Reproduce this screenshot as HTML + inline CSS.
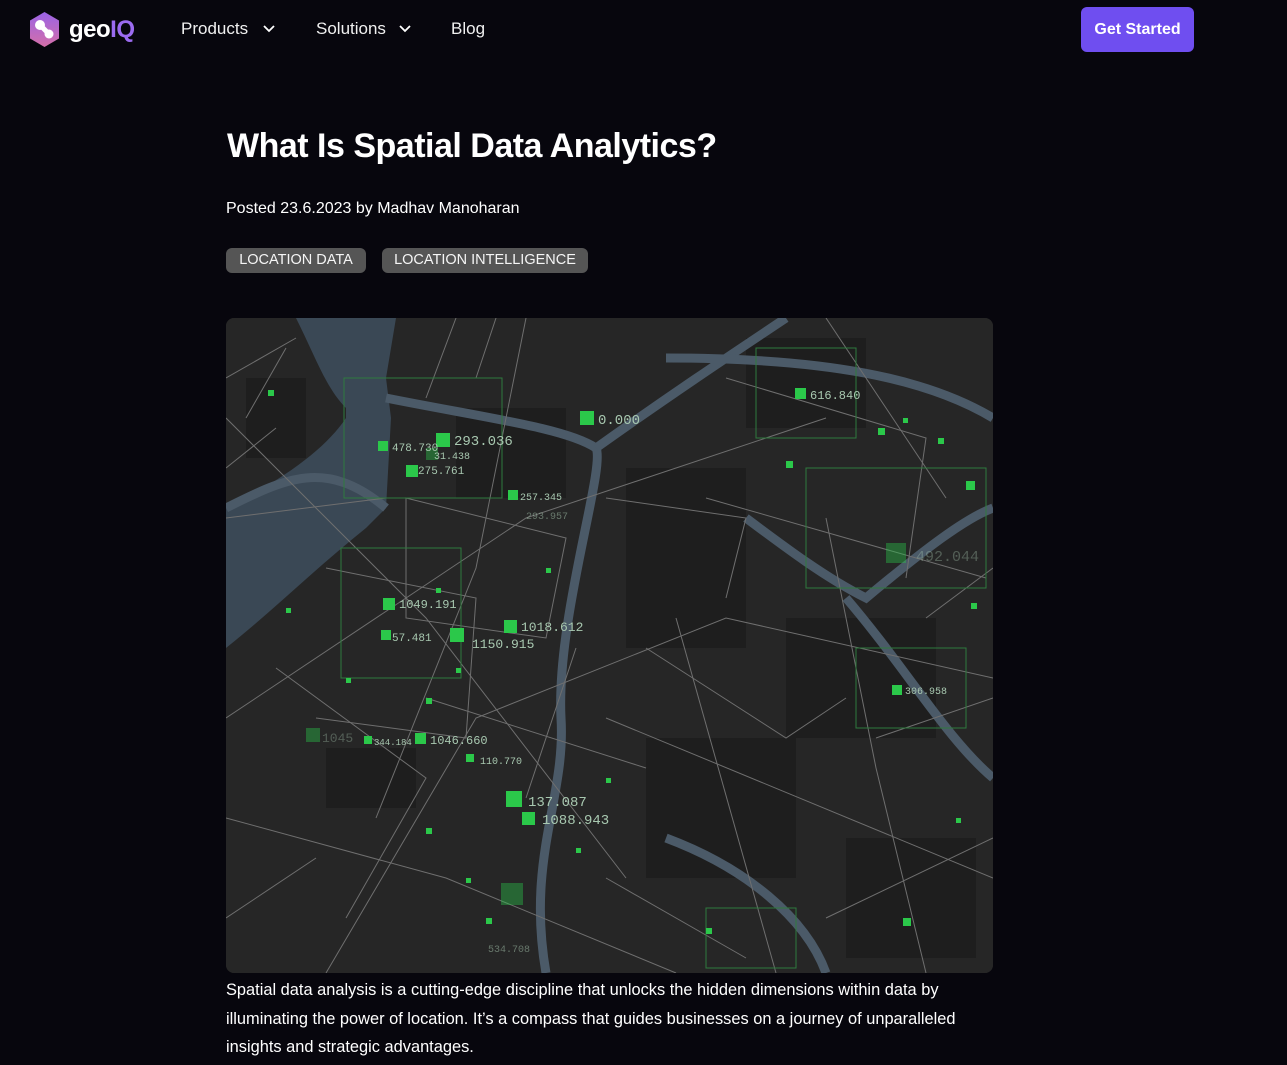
<!DOCTYPE html>
<html><head><meta charset="utf-8"><style>
*{margin:0;padding:0;box-sizing:border-box}
body{width:1287px;height:1065px;background:#07060d;color:#fff;font-family:"Liberation Sans",sans-serif;overflow:hidden;position:relative}
.nav{position:absolute;top:0;left:0;right:0;height:60px}
.logo{position:absolute;left:28px;top:11px;display:flex;align-items:center}
.logo span{font-size:24px;font-weight:bold;margin-left:8px;letter-spacing:-0.5px}
.logo span b{color:#9b6bf0}
.nl{position:absolute;top:19px;font-size:17px;color:#f0f0f0}
.btn{position:absolute;left:1081px;top:7px;width:113px;height:45px;background:#6f4ef0;border-radius:6px;font-weight:bold;font-size:16px;text-align:center;line-height:45px}
h1{position:absolute;left:227px;top:127px;font-size:34px;font-weight:bold;letter-spacing:-0.5px}
.post{position:absolute;left:226px;top:200px;font-size:16px}
.tag{position:absolute;top:248px;height:25px;background:#555;border-radius:6px;font-size:14.5px;line-height:25px;padding:0 9px;color:#f5f5f5;white-space:nowrap;text-align:center}
.img{position:absolute;left:226px;top:318px;width:767px;height:655px;border-radius:8px;overflow:hidden;background:#262626}
.p{position:absolute;left:226px;top:976px;width:760px;font-size:16.4px;line-height:28.5px}
</style></head><body>
<div class="nav">
<div class="logo"><svg width="33" height="37" viewBox="0 0 33 37"><defs><linearGradient id="g" x1="0" y1="0" x2="0" y2="1"><stop offset="0" stop-color="#9a63e6"/><stop offset="1" stop-color="#d56fa8"/></linearGradient></defs><path d="M16.5 1 L31 9.5 V27.5 L16.5 36 L2 27.5 V9.5Z" fill="url(#g)"/><circle cx="12" cy="14" r="5" fill="#fff"/><circle cx="21" cy="23" r="4.5" fill="#fff"/><path d="M12 14 L21 23" stroke="#fff" stroke-width="5"/></svg><span>geo<b>IQ</b></span></div>
<div class="nl" style="left:181px">Products</div>
<svg style="position:absolute;left:263px;top:25px" width="12" height="8"><path d="M1 1 L6 6 L11 1" stroke="#fff" stroke-width="1.8" fill="none"/></svg>
<div class="nl" style="left:316px">Solutions</div>
<svg style="position:absolute;left:399px;top:25px" width="12" height="8"><path d="M1 1 L6 6 L11 1" stroke="#fff" stroke-width="1.8" fill="none"/></svg>
<div class="nl" style="left:451px">Blog</div>
<div class="btn">Get Started</div>
</div>
<h1>What Is Spatial Data Analytics?</h1>
<div class="post">Posted 23.6.2023 by Madhav Manoharan</div>
<div class="tag" style="left:226px;width:140px">LOCATION DATA</div>
<div class="tag" style="left:382px;width:206px">LOCATION INTELLIGENCE</div>
<div class="img"><svg width="767" height="655" viewBox="0 0 767 655">
<rect width="767" height="655" fill="#262626"/>
<g fill="#1e1e1e"><rect x="400" y="150" width="120" height="180"/><rect x="560" y="300" width="150" height="120"/><rect x="20" y="60" width="60" height="80"/><rect x="230" y="90" width="110" height="90"/><rect x="420" y="420" width="150" height="140"/><rect x="620" y="520" width="130" height="120"/><rect x="520" y="20" width="120" height="90"/><rect x="100" y="430" width="90" height="60"/></g>
<path d="M70 0 C90 40 100 70 120 90 L120 100 C100 130 60 160 0 190 L0 330 C50 290 90 250 140 210 L160 190 L165 100 L160 60 L170 0Z" fill="#3a4855"/>
<g stroke="#4b5a68" stroke-width="9" fill="none"><path d="M160 80 C260 100 340 110 370 130 C380 150 330 300 335 400 C340 480 300 540 320 655"/><path d="M370 130 C440 80 500 40 560 0"/><path d="M520 200 C560 230 600 260 640 280 C700 230 740 200 767 190"/><path d="M440 40 C600 40 700 60 767 100"/><path d="M620 280 C680 350 720 420 767 460"/><path d="M440 520 C520 550 580 600 600 655"/><path d="M0 190 C60 160 100 140 160 190"/></g>
<g stroke="#6f6f6f" stroke-width="1" fill="none"><path d="M0 100 L200 300 L400 560"/><path d="M0 400 L300 200 L600 100"/><path d="M100 655 L250 400 L500 300 L767 360"/><path d="M0 500 L220 560 L450 655"/><path d="M300 0 L250 250 L150 500"/><path d="M600 200 L650 450 L700 655"/><path d="M380 400 L767 560"/><path d="M450 300 L550 655"/><path d="M0 200 L160 180"/><path d="M200 380 L420 450"/><path d="M600 0 L720 180"/><path d="M480 180 L760 260"/><path d="M0 60 L70 20 M20 100 L60 30 M0 150 L50 110"/><path d="M180 180 L340 220 L320 320 L180 300Z"/><path d="M100 250 L250 280 L240 420 L90 400"/><path d="M50 350 L200 460 L120 600"/><path d="M380 180 L520 200 L500 280"/><path d="M500 60 L700 120 L680 260"/><path d="M420 330 L560 420 L620 380"/><path d="M380 560 L520 640"/><path d="M650 420 L767 380"/><path d="M600 600 L767 520"/><path d="M0 600 L90 540"/><path d="M230 0 L200 80 M270 0 L250 60"/><path d="M350 330 L300 480"/><path d="M700 300 L767 250"/></g>
<g stroke="#2f7a3e" stroke-width="1" fill="none"><rect x="118" y="60" width="158" height="120"/><rect x="530" y="30" width="100" height="90"/><rect x="580" y="150" width="180" height="120"/><rect x="630" y="330" width="110" height="80"/><rect x="115" y="230" width="120" height="130"/><rect x="480" y="590" width="90" height="60"/></g>
<g fill="#2bc84a"><rect x="354" y="93" width="14" height="14"/><rect x="569" y="70" width="11" height="11"/><rect x="210" y="115" width="14" height="14"/><rect x="152" y="123" width="10" height="10"/><rect x="180" y="147" width="12" height="12"/><rect x="282" y="172" width="10" height="10"/><rect x="157" y="280" width="12" height="12"/><rect x="278" y="302" width="13" height="13"/><rect x="155" y="312" width="10" height="10"/><rect x="224" y="310" width="14" height="14"/><rect x="666" y="367" width="10" height="10"/><rect x="189" y="415" width="11" height="11"/><rect x="280" y="473" width="16" height="16"/><rect x="296" y="494" width="13" height="13"/><rect x="240" y="436" width="8" height="8"/><rect x="138" y="418" width="8" height="8"/><rect x="740" y="163" width="9" height="9"/><rect x="677" y="600" width="8" height="8"/><rect x="652" y="110" width="7" height="7"/><rect x="560" y="143" width="7" height="7"/><rect x="42" y="72" width="6" height="6"/><rect x="200" y="380" width="6" height="6"/><rect x="230" y="350" width="5" height="5"/><rect x="210" y="270" width="5" height="5"/><rect x="60" y="290" width="5" height="5"/><rect x="120" y="360" width="5" height="5"/><rect x="200" y="510" width="6" height="6"/><rect x="260" y="600" width="6" height="6"/><rect x="480" y="610" width="6" height="6"/><rect x="712" y="120" width="6" height="6"/><rect x="677" y="100" width="5" height="5"/><rect x="745" y="285" width="6" height="6"/><rect x="380" y="460" width="5" height="5"/><rect x="350" y="530" width="5" height="5"/><rect x="240" y="560" width="5" height="5"/><rect x="320" y="250" width="5" height="5"/><rect x="730" y="500" width="5" height="5"/></g>
<g fill="#2bc84a" opacity="0.4"><rect x="660" y="225" width="20" height="20"/><rect x="80" y="410" width="14" height="14"/><rect x="275" y="565" width="22" height="22"/><rect x="200" y="130" width="12" height="12"/></g>
<g font-family="Liberation Mono,monospace" fill="#a8c8b0" font-size="12"><text x="372" y="106" font-size="14">0.000</text><text x="584" y="81">616.840</text><text x="228" y="127" font-size="14">293.036</text><text x="166" y="133" font-size="11">478.730</text><text x="208" y="141" font-size="10">31.438</text><text x="192" y="156" font-size="11">275.761</text><text x="294" y="182" font-size="10">257.345</text><text x="300" y="201" font-size="10" opacity="0.5">293.957</text><text x="173" y="290">1049.191</text><text x="295" y="313" font-size="13">1018.612</text><text x="166" y="323" font-size="11">57.481</text><text x="204" y="426">1046.660</text><text x="148" y="427" font-size="9">344.184</text><text x="254" y="446" font-size="10">110.770</text><text x="302" y="488" font-size="14">137.087</text><text x="316" y="506" font-size="14">1088.943</text><text x="679" y="376" font-size="10">306.958</text><text x="246" y="330" font-size="13">1150.915</text><text x="690" y="243" font-size="15" opacity="0.35">492.044</text><text x="96" y="424" font-size="13" opacity="0.35">1045</text><text x="262" y="634" font-size="10" opacity="0.5">534.708</text></g>
</svg></div>
<div class="p">Spatial data analysis is a cutting-edge discipline that unlocks the hidden dimensions within data by illuminating the power of location. It’s a compass that guides businesses on a journey of unparalleled insights and strategic advantages.</div>
</body></html>
